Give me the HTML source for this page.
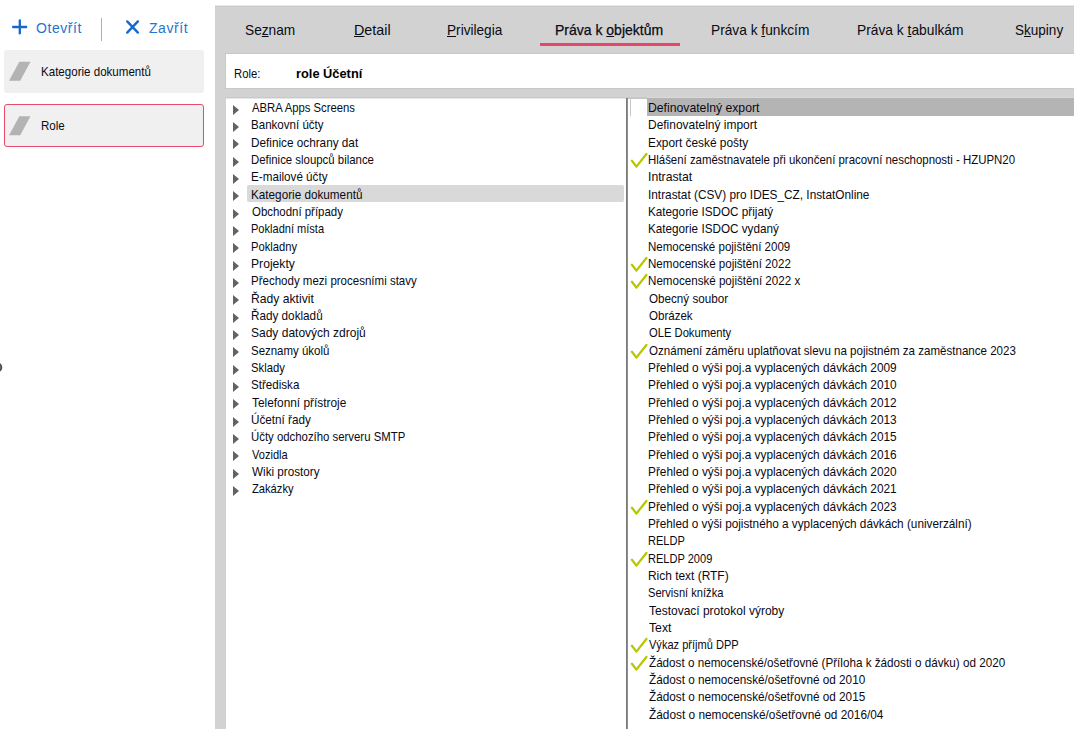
<!DOCTYPE html>
<html><head><meta charset="utf-8">
<style>
html,body{margin:0;padding:0;}
body{width:1074px;height:729px;overflow:hidden;background:#fff;position:relative;font-family:"Liberation Sans",sans-serif;color:#000;}
.a{position:absolute;white-space:pre;}
.sx{position:absolute;white-space:pre;transform-origin:0 0;}
.tb{font-size:14px;line-height:14px;color:#2574d0;letter-spacing:0.55px;}
.card{position:absolute;left:4px;width:200px;height:43px;background:#f0f0f0;border-radius:3px;box-sizing:border-box;}
.card.sel{border:1px solid #e84a6b;}
.card .t{position:absolute;left:37px;font-size:12.6px;line-height:12.6px;color:#0a0a14;transform:scaleX(0.918);transform-origin:0 0;white-space:pre;}
.panel{position:absolute;left:215px;top:5px;right:0;bottom:0;background:#d2d2d2;}
.tab{position:absolute;top:23px;font-size:14.5px;line-height:14.5px;color:#0a0a14;transform:scaleX(0.93);transform-origin:0 0;white-space:pre;}
.tab u{text-decoration:underline;text-decoration-thickness:1px;text-underline-offset:0.5px;}
.hdr{position:absolute;left:226px;top:54px;right:0;height:34px;background:#fff;}
.tree{position:absolute;left:226px;top:98px;width:400px;bottom:0;background:#fff;}
.vdiv{position:absolute;left:626px;top:98px;width:2px;bottom:0;background:linear-gradient(90deg,#7c7c7c 50%,#8e8e8e 50%);}
.list{position:absolute;left:628px;top:98px;right:0;bottom:0;background:#fff;}
.row{position:absolute;left:0;right:0;height:17.333px;}
.tx{position:absolute;top:1.0px;font-size:13.0px;line-height:17.333px;color:#0a0a14;transform:scaleX(0.885);transform-origin:0 0;white-space:pre;}
.tree .tx{left:26px;}
.list .tx{left:21px;}
.tri{position:absolute;left:7px;width:0;height:0;border-top:5px solid transparent;border-bottom:5px solid transparent;border-left:6px solid #636363;}
.ck{position:absolute;left:0;top:0;}
</style></head>
<body>
<svg class="a" style="left:0;top:0" width="210" height="48">
  <path d="M19.8 20.3V33.4M13.1 27H26.2" stroke="#1566d0" stroke-width="2.3" fill="none" stroke-linecap="round"/>
  <path d="M127.2 21.4L137.9 32.6M137.9 21.4L127.2 32.6" stroke="#1868d2" stroke-width="2.4" fill="none" stroke-linecap="round"/>
  <rect x="101" y="18" width="1" height="23" fill="#a9acd0"/>
</svg>
<div class="a tb" style="left:36px;top:21px">Otevřít</div>
<div class="a tb" style="left:149px;top:21px">Zavřít</div>

<div class="card" style="top:50px">
  <svg class="a" style="left:0;top:0" width="40" height="43"><polygon points="5,30.7 16.2,30.7 26.5,11.8 15.3,11.8" fill="#b3b3b3"/></svg>
  <div class="t" style="top:16px">Kategorie dokumentů</div>
</div>
<div class="card sel" style="top:104px">
  <svg class="a" style="left:-1px;top:-1px" width="40" height="43"><polygon points="5,31.2 16.2,31.2 26.5,12.2 15.3,12.2" fill="#b3b3b3"/></svg>
  <div class="t" style="top:15px;left:36px">Role</div>
</div>

<div class="panel"></div>
<div class="a" style="left:215px;top:5px;right:0;height:1px;background:#e8e8e8"></div>
<div class="a" style="left:215px;top:6px;right:0;height:1px;background:#cbcbcb"></div>

<div class="tab" style="left:244.86px;transform:scaleX(0.9442)">Se<u>z</u>nam</div>
<div class="tab" style="left:354.01px;transform:scaleX(0.9857)"><u>D</u>etail</div>
<div class="tab" style="left:447.46px;transform:scaleX(0.9397)"><u>P</u>rivilegia</div>
<div class="tab" style="left:555.24px;transform:scaleX(0.9649);-webkit-text-stroke:0.25px #0a0a14">Práva k <u>o</u>bjektům</div>
<div class="tab" style="left:710.55px;transform:scaleX(0.9461)">Práva k <u>f</u>unkcím</div>
<div class="tab" style="left:857.05px;transform:scaleX(0.9505)">Práva k <u>t</u>abulkám</div>
<div class="tab" style="left:1015.07px;transform:scaleX(0.9333)">S<u>k</u>upiny</div>
<div class="a" style="left:540px;top:43px;width:140px;height:3px;background:#e8456a"></div>

<div class="a" style="left:225px;top:53px;right:0;height:1px;background:#c9c9c9"></div>
<div class="a" style="left:225px;top:53px;width:1px;height:36px;background:#c9c9c9"></div>
<div class="hdr">
  <div class="sx" style="left:8px;top:14px;font-size:12.5px;line-height:12.5px;color:#0a0a14;transform:scaleX(0.905)">Role:</div>
  <div class="sx" style="left:70px;top:13px;font-size:13.5px;line-height:13.5px;font-weight:bold;color:#000;transform:scaleX(0.95)">role Účetní</div>
</div>
<div class="a" style="left:225px;top:88px;right:0;height:1px;background:#c9c9c9"></div>
<div class="a" style="left:225px;top:97px;right:0;height:1px;background:#c9c9c9"></div>

<div class="tree"><div class="a" style="left:0;top:0;right:0;height:1px;background:#e6e6e6"></div><div class="a" style="left:21px;top:86.7px;width:377px;height:17px;background:#d9d9d9;border-radius:2px"></div>
<div class="row" style="top:0.000px"><div class="tri" style="top:6.5px"></div><div class="tx" style="left:25.90px;transform:scaleX(0.8686)">ABRA Apps Screens</div></div>
<div class="row" style="top:17.333px"><div class="tri" style="top:6.5px"></div><div class="tx" style="left:25.01px;transform:scaleX(0.8889)">Bankovní účty</div></div>
<div class="row" style="top:34.667px"><div class="tri" style="top:6.5px"></div><div class="tx" style="left:25.00px;transform:scaleX(0.9042)">Definice ochrany dat</div></div>
<div class="row" style="top:52.000px"><div class="tri" style="top:6.5px"></div><div class="tx" style="left:25.02px;transform:scaleX(0.8770)">Definice sloupců bilance</div></div>
<div class="row" style="top:69.333px"><div class="tri" style="top:6.5px"></div><div class="tx" style="left:25.00px;transform:scaleX(0.8976)">E-mailové účty</div></div>
<div class="row" style="top:86.667px"><div class="tri" style="top:6.5px"></div><div class="tx" style="left:25.00px;transform:scaleX(0.9016)">Kategorie dokumentů</div></div>
<div class="row" style="top:104.000px"><div class="tri" style="top:6.5px"></div><div class="tx" style="left:25.90px;transform:scaleX(0.8796)">Obchodní případy</div></div>
<div class="row" style="top:121.333px"><div class="tri" style="top:6.5px"></div><div class="tx" style="left:25.05px;transform:scaleX(0.8500)">Pokladní místa</div></div>
<div class="row" style="top:138.667px"><div class="tri" style="top:6.5px"></div><div class="tx" style="left:25.04px;transform:scaleX(0.8623)">Pokladny</div></div>
<div class="row" style="top:156.000px"><div class="tri" style="top:6.5px"></div><div class="tx" style="left:24.97px;transform:scaleX(0.9348)">Projekty</div></div>
<div class="row" style="top:173.333px"><div class="tri" style="top:6.5px"></div><div class="tx" style="left:25.01px;transform:scaleX(0.8860)">Přechody mezi procesními stavy</div></div>
<div class="row" style="top:190.667px"><div class="tri" style="top:6.5px"></div><div class="tx" style="left:24.97px;transform:scaleX(0.9348)">Řady aktivit</div></div>
<div class="row" style="top:208.000px"><div class="tri" style="top:6.5px"></div><div class="tx" style="left:25.00px;transform:scaleX(0.9013)">Řady dokladů</div></div>
<div class="row" style="top:225.333px"><div class="tri" style="top:6.5px"></div><div class="tx" style="left:24.98px;transform:scaleX(0.9236)">Sady datových zdrojů</div></div>
<div class="row" style="top:242.667px"><div class="tri" style="top:6.5px"></div><div class="tx" style="left:25.02px;transform:scaleX(0.8816)">Seznamy úkolů</div></div>
<div class="row" style="top:260.000px"><div class="tri" style="top:6.5px"></div><div class="tx" style="left:25.03px;transform:scaleX(0.8658)">Sklady</div></div>
<div class="row" style="top:277.333px"><div class="tri" style="top:6.5px"></div><div class="tx" style="left:25.01px;transform:scaleX(0.8925)">Střediska</div></div>
<div class="row" style="top:294.667px"><div class="tri" style="top:6.5px"></div><div class="tx" style="left:25.90px;transform:scaleX(0.9126)">Telefonní přístroje</div></div>
<div class="row" style="top:312.000px"><div class="tri" style="top:6.5px"></div><div class="tx" style="left:25.00px;transform:scaleX(0.9000)">Účetní řady</div></div>
<div class="row" style="top:329.333px"><div class="tri" style="top:6.5px"></div><div class="tx" style="left:25.03px;transform:scaleX(0.8749)">Účty odchozího serveru SMTP</div></div>
<div class="row" style="top:346.667px"><div class="tri" style="top:6.5px"></div><div class="tx" style="left:25.90px;transform:scaleX(0.8500)">Vozidla</div></div>
<div class="row" style="top:364.000px"><div class="tri" style="top:6.5px"></div><div class="tx" style="left:25.90px;transform:scaleX(0.9000)">Wiki prostory</div></div>
<div class="row" style="top:381.333px"><div class="tri" style="top:6.5px"></div><div class="tx" style="left:25.90px;transform:scaleX(0.8592)">Zakázky</div></div></div>
<svg class="a" style="left:0;top:355px" width="8" height="25"><circle cx="-2.8" cy="12.4" r="4.1" stroke="#505050" stroke-width="2" fill="#9a9a9a"/></svg>
<div class="vdiv"></div>
<div class="a" style="left:647px;top:97px;right:0;height:1px;background:#d8d8d8"></div>
<div class="list"><div class="a" style="left:0;top:0;width:19px;height:1px;background:#c4c4c4"></div>
<div class="a" style="left:2px;top:0;width:1px;height:17.5px;background:#c8c8c8"></div>
<div class="a" style="left:19px;top:0;right:0;height:17.5px;background:#b4b4b4"></div>
<div class="row" style="top:0.000px"><div class="tx" style="left:19.66px;transform:scaleX(0.9400)">Definovatelný export</div></div>
<div class="row" style="top:17.333px"><div class="tx" style="left:19.68px;transform:scaleX(0.9203)">Definovatelný import</div></div>
<div class="row" style="top:34.667px"><div class="tx" style="left:19.69px;transform:scaleX(0.9119)">Export české pošty</div></div>
<div class="row" style="top:52.000px"><svg class="ck" width="20" height="18"><path d="M3.9 10.8L8.4 16.6L18.4 4.0" stroke="#b5c800" stroke-width="2.3" fill="none" stroke-linecap="round" stroke-linejoin="round"/></svg><div class="tx" style="left:19.72px;transform:scaleX(0.8787)">Hlášení zaměstnavatele při ukončení pracovní neschopnosti - HZUPN20</div></div>
<div class="row" style="top:69.333px"><div class="tx" style="left:19.66px;transform:scaleX(0.9400)">Intrastat</div></div>
<div class="row" style="top:86.667px"><div class="tx" style="left:19.69px;transform:scaleX(0.9095)">Intrastat (CSV) pro IDES_CZ, InstatOnline</div></div>
<div class="row" style="top:104.000px"><div class="tx" style="left:19.70px;transform:scaleX(0.9014)">Kategorie ISDOC přijatý</div></div>
<div class="row" style="top:121.333px"><div class="tx" style="left:19.70px;transform:scaleX(0.9007)">Kategorie ISDOC vydaný</div></div>
<div class="row" style="top:138.667px"><div class="tx" style="left:19.71px;transform:scaleX(0.8868)">Nemocenské pojištění 2009</div></div>
<div class="row" style="top:156.000px"><svg class="ck" width="20" height="18"><path d="M3.9 10.8L8.4 16.6L18.4 4.0" stroke="#b5c800" stroke-width="2.3" fill="none" stroke-linecap="round" stroke-linejoin="round"/></svg><div class="tx" style="left:19.71px;transform:scaleX(0.8906)">Nemocenské pojištění 2022</div></div>
<div class="row" style="top:173.333px"><svg class="ck" width="20" height="18"><path d="M3.9 10.8L8.4 16.6L18.4 4.0" stroke="#b5c800" stroke-width="2.3" fill="none" stroke-linecap="round" stroke-linejoin="round"/></svg><div class="tx" style="left:19.71px;transform:scaleX(0.8923)">Nemocenské pojištění 2022 x</div></div>
<div class="row" style="top:190.667px"><div class="tx" style="left:20.60px;transform:scaleX(0.8966)">Obecný soubor</div></div>
<div class="row" style="top:208.000px"><div class="tx" style="left:20.60px;transform:scaleX(0.8878)">Obrázek</div></div>
<div class="row" style="top:225.333px"><div class="tx" style="left:20.60px;transform:scaleX(0.8621)">OLE Dokumenty</div></div>
<div class="row" style="top:242.667px"><svg class="ck" width="20" height="18"><path d="M3.9 10.8L8.4 16.6L18.4 4.0" stroke="#b5c800" stroke-width="2.3" fill="none" stroke-linecap="round" stroke-linejoin="round"/></svg><div class="tx" style="left:20.60px;transform:scaleX(0.8891)">Oznámení záměru uplatňovat slevu na pojistném za zaměstnance 2023</div></div>
<div class="row" style="top:260.000px"><div class="tx" style="left:19.69px;transform:scaleX(0.9103)">Přehled o výši poj.a vyplacených dávkách 2009</div></div>
<div class="row" style="top:277.333px"><div class="tx" style="left:19.69px;transform:scaleX(0.9103)">Přehled o výši poj.a vyplacených dávkách 2010</div></div>
<div class="row" style="top:294.667px"><div class="tx" style="left:19.69px;transform:scaleX(0.9103)">Přehled o výši poj.a vyplacených dávkách 2012</div></div>
<div class="row" style="top:312.000px"><div class="tx" style="left:19.69px;transform:scaleX(0.9103)">Přehled o výši poj.a vyplacených dávkách 2013</div></div>
<div class="row" style="top:329.333px"><div class="tx" style="left:19.69px;transform:scaleX(0.9103)">Přehled o výši poj.a vyplacených dávkách 2015</div></div>
<div class="row" style="top:346.667px"><div class="tx" style="left:19.69px;transform:scaleX(0.9103)">Přehled o výši poj.a vyplacených dávkách 2016</div></div>
<div class="row" style="top:364.000px"><div class="tx" style="left:19.69px;transform:scaleX(0.9103)">Přehled o výši poj.a vyplacených dávkách 2020</div></div>
<div class="row" style="top:381.333px"><div class="tx" style="left:19.69px;transform:scaleX(0.9103)">Přehled o výši poj.a vyplacených dávkách 2021</div></div>
<div class="row" style="top:398.667px"><svg class="ck" width="20" height="18"><path d="M3.9 10.8L8.4 16.6L18.4 4.0" stroke="#b5c800" stroke-width="2.3" fill="none" stroke-linecap="round" stroke-linejoin="round"/></svg><div class="tx" style="left:19.69px;transform:scaleX(0.9103)">Přehled o výši poj.a vyplacených dávkách 2023</div></div>
<div class="row" style="top:416.000px"><div class="tx" style="left:19.70px;transform:scaleX(0.9048)">Přehled o výši pojistného a vyplacených dávkách (univerzální)</div></div>
<div class="row" style="top:433.333px"><div class="tx" style="left:19.75px;transform:scaleX(0.8500)">RELDP</div></div>
<div class="row" style="top:450.667px"><svg class="ck" width="20" height="18"><path d="M3.9 10.8L8.4 16.6L18.4 4.0" stroke="#b5c800" stroke-width="2.3" fill="none" stroke-linecap="round" stroke-linejoin="round"/></svg><div class="tx" style="left:19.75px;transform:scaleX(0.8500)">RELDP 2009</div></div>
<div class="row" style="top:468.000px"><div class="tx" style="left:19.68px;transform:scaleX(0.9174)">Rich text (RTF)</div></div>
<div class="row" style="top:485.333px"><div class="tx" style="left:19.74px;transform:scaleX(0.8552)">Servisní knížka</div></div>
<div class="row" style="top:502.667px"><div class="tx" style="left:20.60px;transform:scaleX(0.9218)">Testovací protokol výroby</div></div>
<div class="row" style="top:520.000px"><div class="tx" style="left:20.60px;transform:scaleX(0.9400)">Text</div></div>
<div class="row" style="top:537.333px"><svg class="ck" width="20" height="18"><path d="M3.9 10.8L8.4 16.6L18.4 4.0" stroke="#b5c800" stroke-width="2.3" fill="none" stroke-linecap="round" stroke-linejoin="round"/></svg><div class="tx" style="left:20.60px;transform:scaleX(0.8500)">Výkaz příjmů DPP</div></div>
<div class="row" style="top:554.667px"><svg class="ck" width="20" height="18"><path d="M3.9 10.8L8.4 16.6L18.4 4.0" stroke="#b5c800" stroke-width="2.3" fill="none" stroke-linecap="round" stroke-linejoin="round"/></svg><div class="tx" style="left:20.60px;transform:scaleX(0.8977)">Žádost o nemocenské/ošetřovné (Příloha k žádosti o dávku) od 2020</div></div>
<div class="row" style="top:572.000px"><div class="tx" style="left:20.60px;transform:scaleX(0.9038)">Žádost o nemocenské/ošetřovné od 2010</div></div>
<div class="row" style="top:589.333px"><div class="tx" style="left:20.60px;transform:scaleX(0.9038)">Žádost o nemocenské/ošetřovné od 2015</div></div>
<div class="row" style="top:606.667px"><div class="tx" style="left:20.60px;transform:scaleX(0.9113)">Žádost o nemocenské/ošetřovné od 2016/04</div></div></div>
</body></html>
